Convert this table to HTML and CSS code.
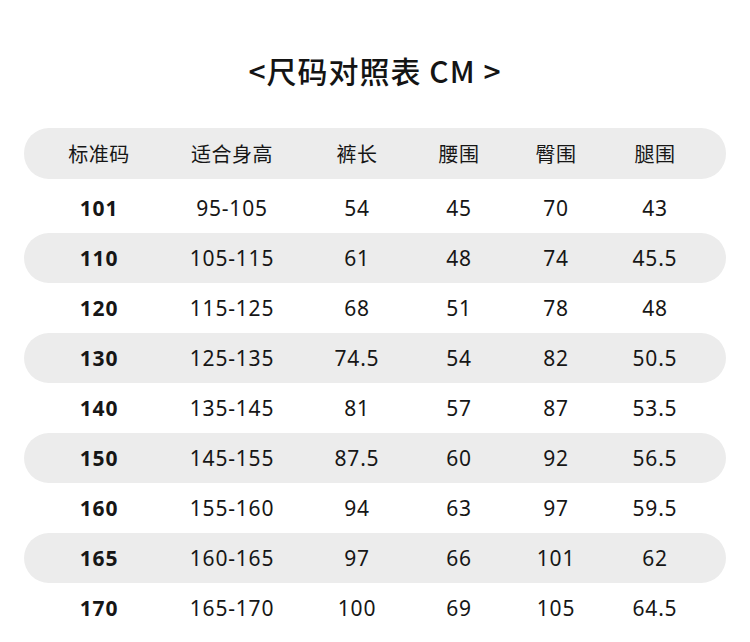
FILE: index.html
```html
<!DOCTYPE html>
<html lang="zh">
<head>
<meta charset="utf-8">
<link rel="stylesheet" href="styles.css">
</head>
<body>
<div class="page">
  <h1 class="title">&lt;尺码对照表 CM &gt;</h1>
  <div class="table">
    <div class="row head band"><span>标准码</span><span>适合身高</span><span>裤长</span><span>腰围</span><span>臀围</span><span>腿围</span></div>
    <div class="row"><span class="b">101</span><span>95-105</span><span>54</span><span>45</span><span>70</span><span>43</span></div>
    <div class="row band"><span class="b">110</span><span>105-115</span><span>61</span><span>48</span><span>74</span><span>45.5</span></div>
    <div class="row"><span class="b">120</span><span>115-125</span><span>68</span><span>51</span><span>78</span><span>48</span></div>
    <div class="row band"><span class="b">130</span><span>125-135</span><span>74.5</span><span>54</span><span>82</span><span>50.5</span></div>
    <div class="row"><span class="b">140</span><span>135-145</span><span>81</span><span>57</span><span>87</span><span>53.5</span></div>
    <div class="row band"><span class="b">150</span><span>145-155</span><span>87.5</span><span>60</span><span>92</span><span>56.5</span></div>
    <div class="row"><span class="b">160</span><span>155-160</span><span>94</span><span>63</span><span>97</span><span>59.5</span></div>
    <div class="row band"><span class="b">165</span><span>160-165</span><span>97</span><span>66</span><span>101</span><span>62</span></div>
    <div class="row"><span class="b">170</span><span>165-170</span><span>100</span><span>69</span><span>105</span><span>64.5</span></div>
  </div>
</div>
</body>
</html>
```
FILE: styles.css
```css
html, body {
  margin: 0;
  padding: 0;
  background: #ffffff;
}
.page {
  width: 750px;
  height: 642px;
  overflow: hidden;
  font-family: "Noto Sans", "Noto Sans CJK SC", sans-serif;
  color: #161616;
}
.title {
  margin: 0;
  padding-top: 50px;
  height: 128px;
  box-sizing: border-box;
  text-align: center;
  font-family: "Noto Sans CJK SC", sans-serif;
  font-size: 30px;
  font-weight: 500;
  line-height: 40px;
  color: #141414;
  letter-spacing: 1px;
}
.table {
  display: flex;
  flex-direction: column;
  padding: 0 24px 0 24px;
}
.row {
  display: grid;
  grid-template-columns: 150px 116px 134px 70px 124px 74px;
  height: 50px;
  align-items: center;
  font-size: 21px;
  letter-spacing: 0.8px;
  border-radius: 25px;
}
.row span {
  text-align: center;
  white-space: nowrap;
}
.row.head {
  height: 51px;
  margin-bottom: 4px;
  font-family: "Noto Sans CJK SC", sans-serif;
  font-size: 20px;
  letter-spacing: 0.5px;
}
.band {
  background: #ececec;
}
.b {
  font-weight: 700;
}
```
